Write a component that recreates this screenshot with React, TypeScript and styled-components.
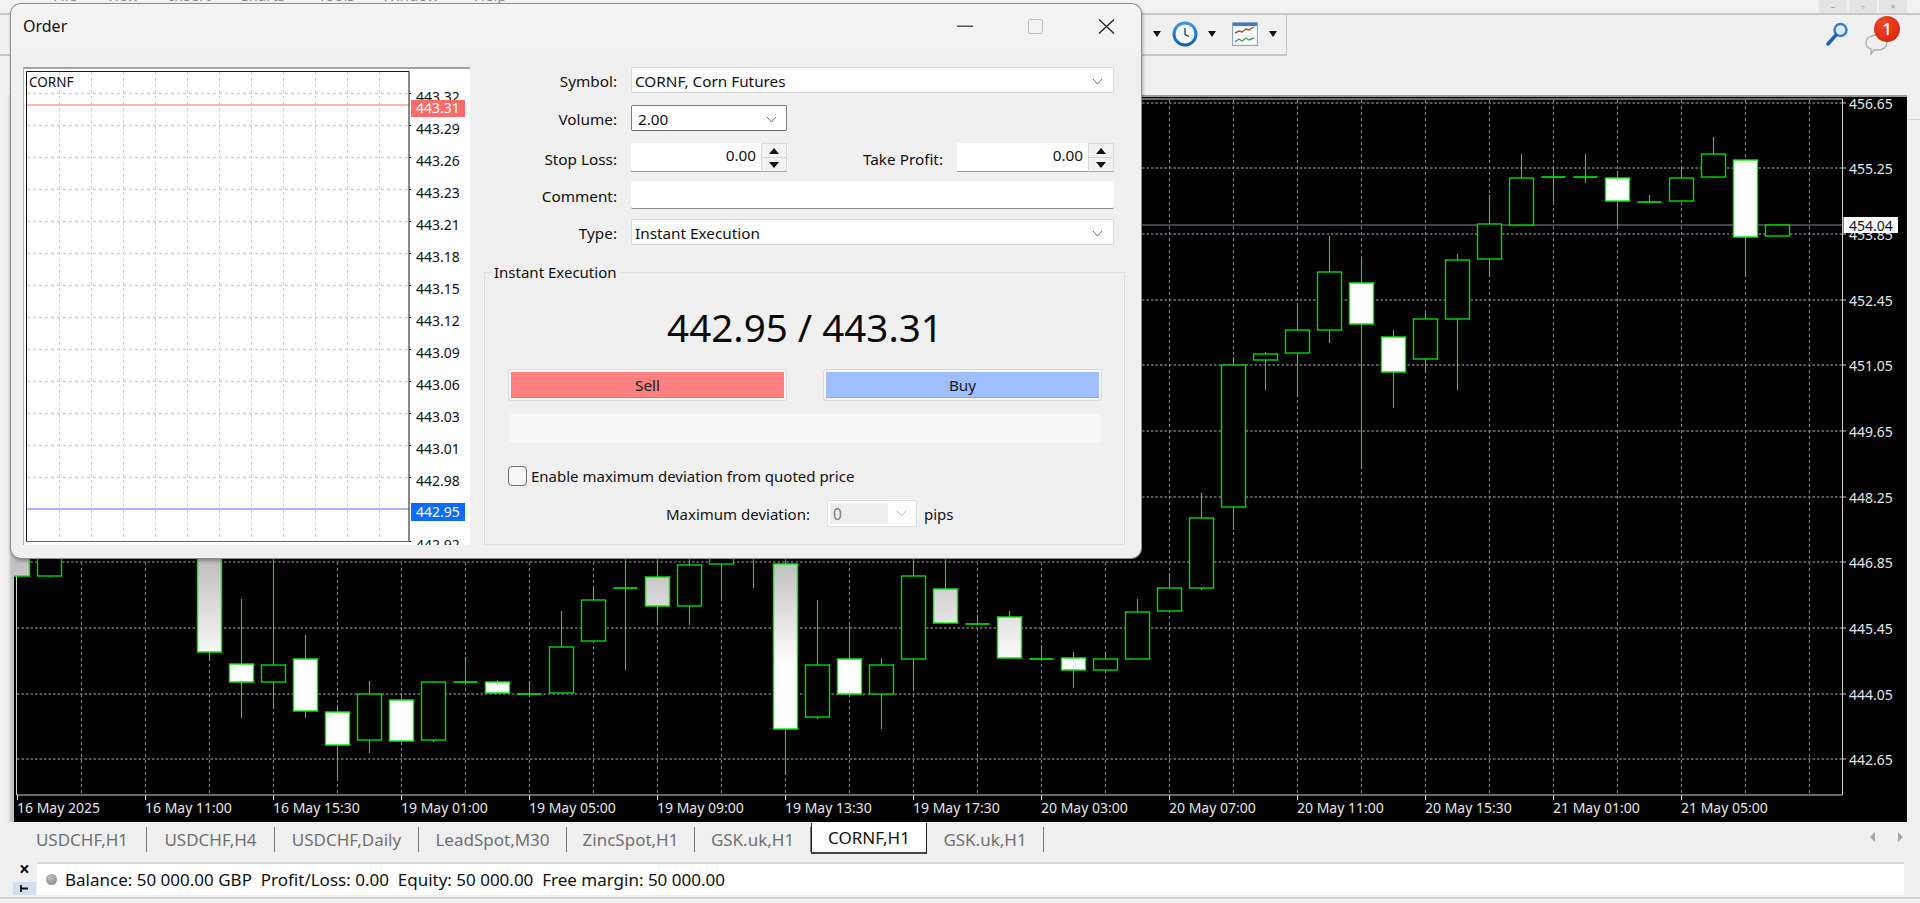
import React from "react"
import styled, { createGlobalStyle } from "styled-components"

const FONT = `"Noto Sans", "Liberation Sans", sans-serif`

type Candle = [number, number, number, number, number, boolean]

// x, wick top, body top, body bottom, wick bottom, filled
const CANDLES: Candle[] = [
  [17.5, 540, 540, 576, 576, true],
  [49.5, 540, 540, 576, 577, false],
  [209.5, 540, 540, 652, 659, true],
  [241.5, 599, 664, 682, 718, true],
  [273.5, 540, 665, 682, 707, false],
  [305.5, 635, 659, 711, 718, true],
  [337.5, 705, 712, 745, 778, true],
  [369.5, 681, 694, 740, 753, false],
  [401.5, 693, 700, 741, 741, true],
  [433.5, 681, 682, 740, 742, false],
  [465.5, 657, 682, 682, 682, false],
  [497.5, 680, 682, 693, 693, true],
  [529.5, 681, 694, 694, 694, false],
  [561.5, 611, 647, 693, 693, false],
  [593.5, 586, 600, 641, 641, false],
  [625.5, 540, 588, 588, 670, false],
  [657.5, 540, 577, 606, 625, true],
  [689.5, 540, 565, 606, 625, false],
  [721.5, 540, 540, 564, 600, false],
  [753.5, 540, 540, 540, 588, false],
  [785.5, 540, 564, 729, 775, true],
  [817.5, 600, 665, 717, 719, false],
  [849.5, 626, 659, 694, 694, true],
  [881.5, 658, 665, 694, 729, false],
  [913.5, 540, 576, 659, 689, false],
  [945.5, 540, 589, 623, 624, true],
  [977.5, 615, 624, 624, 624, false],
  [1009.5, 611, 617, 658, 658, true],
  [1041.5, 645, 659, 659, 659, false],
  [1073.5, 652, 658, 670, 688, true],
  [1105.5, 652, 659, 670, 672, false],
  [1137.5, 599, 612, 659, 659, false],
  [1169.5, 573, 588, 611, 611, false],
  [1201.5, 493, 518, 588, 590, false],
  [1233.5, 357, 365, 507, 530, false],
  [1265.5, 352, 354, 360, 390, false],
  [1297.5, 303, 330, 353, 396, false],
  [1329.5, 236, 272, 330, 343, false],
  [1361.5, 259, 283, 324, 468, true],
  [1393.5, 330, 337, 372, 408, true],
  [1425.5, 313, 319, 359, 373, false],
  [1457.5, 254, 260, 319, 390, false],
  [1489.5, 195, 224, 259, 275, false],
  [1521.5, 154, 178, 225, 225, false],
  [1553.5, 166, 177, 177, 202, false],
  [1585.5, 154, 177, 177, 183, false],
  [1617.5, 171, 178, 201, 226, true],
  [1649.5, 195, 202, 202, 202, false],
  [1681.5, 166, 178, 201, 201, false],
  [1713.5, 137, 154, 177, 178, false],
  [1745.5, 160, 160, 237, 275, true],
  [1777.5, 224, 225, 236, 236, false],
]

const PRICE_LEVELS: [number, string][] = [
  [103, "456.65"],
  [168, "455.25"],
  [234, "453.85"],
  [300, "452.45"],
  [365, "451.05"],
  [431, "449.65"],
  [497, "448.25"],
  [562, "446.85"],
  [628, "445.45"],
  [694, "444.05"],
  [759, "442.65"],
]

const TIME_LABELS = [
  "16 May 2025",
  "16 May 11:00",
  "16 May 15:30",
  "19 May 01:00",
  "19 May 05:00",
  "19 May 09:00",
  "19 May 13:30",
  "19 May 17:30",
  "20 May 03:00",
  "20 May 07:00",
  "20 May 11:00",
  "20 May 15:30",
  "21 May 01:00",
  "21 May 05:00",
]

const MINI_LEVELS: [number, string][] = [
  [93, "443.32"],
  [125, "443.29"],
  [157, "443.26"],
  [189, "443.23"],
  [221, "443.21"],
  [253, "443.18"],
  [285, "443.15"],
  [317, "443.12"],
  [349, "443.09"],
  [381, "443.06"],
  [413, "443.03"],
  [445, "443.01"],
  [477, "442.98"],
  [541, "442.92"],
]

const TABS: [string, number][] = [
  ["USDCHF,H1", 129],
  ["USDCHF,H4", 128],
  ["USDCHF,Daily", 144],
  ["LeadSpot,M30", 148],
  ["ZincSpot,H1", 128],
  ["GSK.uk,H1", 116],
  ["CORNF,H1", 116],
  ["GSK.uk,H1", 117],
]

const MENU = [
  ["File", 53],
  ["View", 106],
  ["Insert", 169],
  ["Charts", 239],
  ["Tools", 318],
  ["Window", 382],
  ["Help", 474],
] as const

const GlobalStyle = createGlobalStyle`
  html, body {
    margin: 0;
    height: 100%;
    overflow: hidden;
    background: #f0f0f0;
    font-family: ${FONT};
  }
`

const Page = styled.div`
  position: relative;
  width: 1920px;
  height: 903px;
  overflow: hidden;
  background: #f0f0f0;
`

const MenuBar = styled.div`
  height: 15px;
  box-sizing: border-box;
  border-bottom: 2px solid #c8c8c8;
  overflow: hidden;
  display: flex;
  background: #f2f2f2;
`

const MenuItem = styled.span<{ $w: number; $first?: number }>`
  width: ${(p) => p.$w}px;
  margin-left: ${(p) => p.$first ?? 0}px;
  margin-top: -15px;
  font-size: 15px;
  line-height: 20px;
  color: #8a8a8a;
  white-space: nowrap;
`

const WindowButtons = styled.div`
  display: flex;
  gap: 2px;
  margin-left: auto;
  margin-right: 13px;
`

const WindowButton = styled.div`
  width: 28px;
  height: 13px;
  background: #e4e4e4;
  display: flex;
  align-items: center;
  justify-content: center;
  font-size: 9px;
  color: #999;
`

const TopRow = styled.div`
  display: flex;
  height: 41px;
  margin-bottom: 39px;
  align-items: stretch;
`

const Toolbar = styled.div`
  width: 1287px;
  box-sizing: border-box;
  border-right: 1px solid #c6c6c6;
  border-bottom: 2px solid #c6c6c6;
  background: #f0f0f0;
  display: flex;
  align-items: center;
  justify-content: flex-end;
  padding-right: 9px;
  padding-bottom: 1px;
`

const DropArrow = styled.div`
  width: 0;
  height: 0;
  border-left: 4px solid transparent;
  border-right: 4px solid transparent;
  border-top: 6px solid #111;
`

const RightTools = styled.div`
  margin-left: auto;
  display: flex;
  align-items: center;
  gap: 16px;
  padding-right: 20px;
`

const BubbleWrap = styled.div`
  position: relative;
  width: 35px;
  height: 36px;
`

const Badge = styled.div`
  position: absolute;
  right: 0;
  top: -2px;
  width: 26px;
  height: 26px;
  border-radius: 50%;
  background: radial-gradient(circle at 40% 30%, #f04a28, #cf1c06);
  color: #fff;
  font-size: 17px;
  font-weight: 500;
  line-height: 26px;
  text-align: center;
`

const ChartRow = styled.div`
  display: flex;
  height: 727px;
`

const StripLeft = styled.div`
  width: 14px;
  background: linear-gradient(90deg, #f2f2f2 0, #eeeeee 8px, #bdbdbd 12px, #c8c8c8 14px);
`

const StripRight = styled.div`
  flex: 1;
  background: linear-gradient(#f0f0f0 24px, #d6d6d6 24px, #d6d6d6 25px, #f0f0f0 25px);
`

const ChartPanel = styled.div`
  width: 1893px;
  height: 727px;
  background: #000;
`

const ChartSvg = styled.svg`
  display: block;
  font-family: ${FONT};
`

const TabBar = styled.div`
  height: 33px;
  margin-left: 14px;
  padding-left: 4px;
  padding-right: 17px;
  display: flex;
  align-items: flex-start;
`

const Tab = styled.div<{ $w: number; $active?: boolean }>`
  width: ${(p) => p.$w}px;
  height: ${(p) => (p.$active ? 31 : 25)}px;
  margin-top: ${(p) => (p.$active ? 1 : 5)}px;
  box-sizing: border-box;
  display: flex;
  align-items: center;
  justify-content: center;
  font-size: 17px;
  color: ${(p) => (p.$active ? "#111" : "#707070")};
  background: ${(p) => (p.$active ? "#fff" : "transparent")};
  border-right: 1px solid ${(p) => (p.$active ? "#222" : "#777")};
  border-left: ${(p) => (p.$active ? "1px solid #222" : "0")};
  border-bottom: ${(p) => (p.$active ? "2px solid #444" : "0")};
  white-space: nowrap;
`

const TabArrows = styled.div`
  margin-left: auto;
  margin-top: 10px;
  display: flex;
  gap: 23px;
`

const TabArrow = styled.div<{ $right?: boolean }>`
  width: 0;
  height: 0;
  border-top: 5px solid transparent;
  border-bottom: 5px solid transparent;
  border-${(p) => (p.$right ? "left" : "right")}: 5px solid #a6a6a6;
`

const StatusRow = styled.div`
  height: 37px;
  margin-top: 7px;
  display: flex;
  align-items: flex-start;
  border-bottom: 2px solid #d2d2d2;
  box-sizing: border-box;
`

const StatusSide = styled.div`
  width: 37px;
  height: 33px;
  flex: none;
  padding-left: 13px;
  box-sizing: border-box;
  display: flex;
  flex-direction: column;
`

const StatusClose = styled.div`
  width: 23px;
  height: 20px;
  text-align: center;
  font-size: 19px;
  font-weight: 700;
  line-height: 14px;
  color: #111;
`

const StatusDock = styled.div`
  width: 23px;
  height: 13px;
  background: #cfe0f2;
  display: flex;
  align-items: center;
  justify-content: center;
`

const StatusBox = styled.div`
  width: 1858px;
  height: 31px;
  background: #fff;
  border-top: 2px solid #d8d8d8;
  display: flex;
  align-items: center;
  padding-left: 9px;
  font-size: 17px;
  color: #111;
  white-space: pre;
`

const StatusDot = styled.div`
  width: 11px;
  height: 11px;
  border-radius: 50%;
  margin-right: 8px;
  background: radial-gradient(circle at 40% 35%, #c4c4c4, #7c7c7c);
`

const Dialog = styled.div`
  position: absolute;
  left: 11px;
  top: 4px;
  width: 1130px;
  height: 554px;
  background: #f0f0f0;
  border-radius: 10px;
  box-shadow: 0 0 0 1px #8e8e8e, 1px 2px 4px rgba(0, 0, 0, 0.45);
  overflow: hidden;
  color: #111;
`

const DialogTitle = styled.div`
  height: 44px;
  background: #f3f3f3;
  display: flex;
  align-items: center;
  padding: 0 26px 0 12px;
  font-size: 16px;
  box-sizing: border-box;
`

const DialogButtons = styled.div`
  margin-left: auto;
  display: flex;
  align-items: center;
  gap: 55px;
`

const DialogBody = styled.div`
  display: flex;
  padding: 19px 0 0 12px;
  align-items: flex-start;
`

const MiniBox = styled.div`
  width: 447px;
  height: 478px;
  flex: none;
  background: #fff;
  border-top: 2px solid #a2a2a2;
  border-left: 1px solid #b4b4b4;
  box-sizing: border-box;
  overflow: hidden;
`

const MiniSvg = styled.svg`
  display: block;
  font-family: ${FONT};
`

const FormColumn = styled.div`
  width: 641px;
  margin-left: 14px;
  flex: none;
`

const FormRow = styled.div<{ $mt?: number }>`
  display: flex;
  align-items: center;
  margin-top: ${(p) => p.$mt ?? 0}px;
`

const FieldLabel = styled.label<{ $w?: number }>`
  width: ${(p) => p.$w ?? 133}px;
  flex: none;
  text-align: right;
  margin-right: 14px;
  padding-top: 2px;
  font-size: 15.3px;
  white-space: nowrap;
`

const Combo = styled.div<{ $w: number; $focus?: boolean }>`
  width: ${(p) => p.$w}px;
  height: 26px;
  box-sizing: border-box;
  background: #fff;
  border: 1px solid ${(p) => (p.$focus ? "#7a7a7a" : "#dcdcdc")};
  border-bottom-color: ${(p) => (p.$focus ? "#6a6a6a" : "#cfcfcf")};
  border-radius: 2px;
  display: flex;
  align-items: center;
  padding: 2px ${(p) => (p.$focus ? 9 : 10)}px 0 ${(p) => (p.$focus ? 6 : 3)}px;
  font-size: 15.3px;
  justify-content: space-between;
`

const SpinField = styled.div<{ $w: number }>`
  display: flex;
  width: ${(p) => p.$w}px;
  height: 29px;
  flex: none;
`

const SpinInput = styled.div`
  flex: 1;
  background: #fff;
  border-bottom: 1px solid #9a9a9a;
  box-sizing: border-box;
  display: flex;
  align-items: center;
  justify-content: flex-end;
  padding: 0 5px 5px 0;
  font-size: 15.3px;
`

const SpinButtons = styled.div`
  width: 26px;
  display: flex;
  flex-direction: column;
  box-sizing: border-box;
  border: 1px solid #dadada;
  border-bottom-color: #a8a8a8;
  gap: 1px;
  background: #d4d4d4;
`

const SpinButton = styled.div`
  flex: 1;
  background: #f2f2f2;
  display: flex;
  align-items: center;
  justify-content: center;
`

const SpinArrow = styled.div<{ $down?: boolean }>`
  width: 0;
  height: 0;
  border-left: 5px solid transparent;
  border-right: 5px solid transparent;
  border-${(p) => (p.$down ? "top" : "bottom")}: 6px solid #111;
`

const CommentInput = styled.div`
  width: 483px;
  height: 28px;
  background: #fff;
  border-bottom: 1px solid #8e8e8e;
  box-sizing: border-box;
  border-radius: 2px;
`

const Group = styled.fieldset`
  margin: 17px 0 0;
  padding: 0 23px 17px 24px;
  border: 1px solid #dedede;
  box-sizing: border-box;
  width: 641px;
  min-width: 0;
  height: 283px;
`

const GroupLegend = styled.legend`
  margin-left: -17px;
  padding: 0 2px;
  height: 20px;
  line-height: 20px;
  font-size: 15px;
`

const Price = styled.div`
  margin-top: 23px;
  height: 46px;
  line-height: 44px;
  text-align: center;
  font-size: 38.6px;
  color: #0a0a0a;
`

const TradeRow = styled.div`
  display: flex;
  justify-content: space-between;
  margin-top: 19px;
`

const TradeButton = styled.div<{ $color: string; $edge: string }>`
  width: 277px;
  height: 30px;
  box-sizing: border-box;
  border: 2px solid #f7f7f7;
  border-radius: 2px;
  box-shadow: 0 0 0 1px #dcdcdc, inset 0 -1px 0 ${(p) => p.$edge};
  background: ${(p) => p.$color};
  display: flex;
  align-items: center;
  justify-content: center;
  font-size: 15.3px;
  color: #1a1a1a;
`

const MessageBar = styled.div`
  height: 29px;
  margin-top: 14px;
  background: #f8f8f8;
  border-radius: 2px;
`

const CheckRow = styled.div`
  display: flex;
  align-items: center;
  height: 20px;
  margin-top: 23px;
  margin-left: -1px;
  font-size: 15px;
  white-space: nowrap;
`

const CheckBox = styled.div`
  width: 19px;
  height: 20px;
  box-sizing: border-box;
  border: 1px solid #6e6e6e;
  border-radius: 4px;
  background: #f6f6f6;
  margin-right: 4px;
`

const DeviationRow = styled.div`
  display: flex;
  align-items: center;
  height: 27px;
  margin-top: 14px;
  margin-left: 157px;
  font-size: 15px;
  white-space: nowrap;
`

const DeviationCombo = styled.div`
  width: 90px;
  height: 27px;
  margin: 0 7px 0 17px;
  padding: 2px;
  box-sizing: border-box;
  background: #fff;
  border: 1px solid #dedede;
  border-radius: 2px;
  display: flex;
  align-items: center;
`

const DeviationValue = styled.div`
  width: 58px;
  height: 100%;
  padding-left: 3px;
  box-sizing: border-box;
  background: #eeeeee;
  color: #7c7c7c;
  font-size: 15.5px;
  display: flex;
  align-items: center;
`

const DeviationChevron = styled.div`
  flex: 1;
  display: flex;
  justify-content: center;
`

const Chevron = ({ light }: { light?: boolean }) => (
  <svg width="11" height="7" viewBox="0 0 11 7" fill="none">
    <path d="M1 1l4.5 5L10 1" stroke={light ? "#b4b4b4" : "#6e6e6e"} strokeWidth="1" />
  </svg>
)

const ClockIcon = () => (
  <svg width="26" height="26" viewBox="0 0 26 26" style={{ marginRight: 10, marginLeft: 11 }}>
    <defs>
      <linearGradient id="ring" x1="0" y1="0" x2="0" y2="1">
        <stop offset="0" stopColor="#3d9be0" />
        <stop offset="1" stopColor="#0b5fa8" />
      </linearGradient>
    </defs>
    <circle cx="13" cy="13" r="12.5" fill="url(#ring)" />
    <circle cx="13" cy="13" r="9.5" fill="#f4f7fa" />
    <path d="M13 7v6.5l4 2" stroke="#334" strokeWidth="1.3" fill="none" />
  </svg>
)

const ChartsIcon = () => (
  <svg width="26" height="24" viewBox="0 0 26 24" style={{ marginRight: 11, marginLeft: 16 }}>
    <rect x="0.5" y="0.5" width="25" height="23" fill="#e9f0f7" stroke="#8fa9c4" />
    <rect x="1" y="1" width="24" height="3" fill="#3e7fc1" />
    <rect x="2" y="5" width="22" height="8" fill="#fff" />
    <rect x="2" y="14" width="22" height="8" fill="#fff" />
    <path d="M3 11l4-2 3 1 4-3 3 1 5-3" stroke="#b5452c" strokeWidth="1.4" fill="none" />
    <path d="M3 20l4-3 3 2 4-3 3 2 5-2" stroke="#3aa04a" strokeWidth="1.4" fill="none" />
  </svg>
)

const SearchIcon = () => (
  <svg width="24" height="24" viewBox="0 0 24 24" style={{ marginTop: -3 }}>
    <circle cx="15.500" cy="8" r="6" fill="#dbeafa" stroke="#3a78c8" strokeWidth="2.4" />
    <path d="M11 13L3 22" stroke="#1f5fb4" strokeWidth="3.4" strokeLinecap="round" />
  </svg>
)

const BubbleIcon = () => (
  <svg width="24" height="22" viewBox="0 0 24 22" style={{ position: "absolute", left: 0, top: 16 }}>
    <path
      d="M12 1c6 0 10 3 10 7.500S18 16 12 16l-3 0-3 4 0-5C3 14 1 11.500 1 8.500 1 4 6 1 12 1z"
      fill="#eef0f0"
      stroke="#a6aaaa"
      strokeWidth="1.300"
    />
  </svg>
)

const MainChart = () => {
  const vGrid = Array.from({ length: 28 }, (_, i) => 81.5 + 64 * i)
  const ticks = TIME_LABELS.map((_, i) => 17 + 128 * i)
  return (
    <ChartSvg width={1893} height={727} viewBox="14 95 1893 727">
      <defs>
        <linearGradient id="fade" gradientUnits="userSpaceOnUse" x1="0" y1="558" x2="0" y2="665">
          <stop offset="0" stopColor="#bdbdbd" />
          <stop offset="1" stopColor="#ffffff" />
        </linearGradient>
      </defs>
      <rect x="14" y="95" width="1893" height="2" fill="#9a9a9a" />
      {vGrid.map((x) => (
        <line key={x} x1={x} x2={x} y1={100} y2={795} stroke="#76859a" strokeDasharray="3 3" />
      ))}
      {PRICE_LEVELS.map(([y]) => (
        <line key={y} x1={17} x2={1842} y1={y} y2={y} stroke="#70757a" strokeWidth="1.6" strokeDasharray="2.5 2" />
      ))}
      <line x1={14} x2={1843} y1={225} y2={225} stroke="#565c62" strokeWidth="1.6" />
      <path d="M16.500 99H1842.500V795H16.500Z" fill="none" stroke="#cfcfcf" />
      {ticks.map((x) => (
        <line key={x} x1={x + 0.5} x2={x + 0.5} y1={795} y2={800} stroke="#d8d8d8" />
      ))}
      {PRICE_LEVELS.map(([y]) => (
        <line key={y} x1={1843} x2={1846} y1={y} y2={y} stroke="#cfcfcf" />
      ))}
      {CANDLES.map(([x, wickTop, top, bottom, wickBottom, filled]) => (
        <g key={x}>
          <line x1={x} x2={x} y1={wickTop} y2={wickBottom} stroke="#00f000" strokeWidth="1.1" />
          {top === bottom ? (
            <line x1={x - 12} x2={x + 12} y1={top} y2={top} stroke="#00d800" strokeWidth="1.8" />
          ) : (
            <rect
              x={x - 12}
              y={top}
              width={24}
              height={bottom - top}
              fill={filled ? (x < 1141 ? "url(#fade)" : "#fff") : "#000"}
              stroke={filled ? "#00f000" : "#00d800"}
              strokeWidth="1.4"
            />
          )}
        </g>
      ))}
      {PRICE_LEVELS.map(([y, label]) => (
        <text key={label} x={1849} y={y + 6} fill="#e4e4e4" fontSize="14">
          {label}
        </text>
      ))}
      <rect x="1843.500" y="217" width="54.500" height="16" fill="#fff" />
      <text x={1849} y={231} fill="#111" fontSize="14">
        454.04
      </text>
      {TIME_LABELS.map((label, i) => (
        <text key={label} x={17 + 128 * i} y={813} fill="#e4e4e4" fontSize="14">
          {label}
        </text>
      ))}
    </ChartSvg>
  )
}

const MiniChart = () => {
  const vGrid = Array.from({ length: 11 }, (_, i) => 59.5 + 32 * i)
  return (
    <MiniSvg width={446} height={476} viewBox="24 69 446 476">
      {vGrid.map((x) => (
        <line key={x} x1={x} x2={x} y1={72} y2={541} stroke="#d2d2d2" strokeDasharray="3 3" />
      ))}
      {MINI_LEVELS.filter(([y]) => y < 541).map(([y]) => (
        <line key={y} x1={27} x2={409} y1={y + 0.5} y2={y + 0.5} stroke="#d2d2d2" strokeWidth="1.3" strokeDasharray="3 3" />
      ))}
      <line x1={27} x2={409} y1={105} y2={105} stroke="#ff9c9c" strokeWidth="1.5" />
      <line x1={27} x2={409} y1={509} y2={509} stroke="#78a4f4" strokeWidth="1.5" />
      <path d="M26.500 71.500H409V541.500H26.500Z" fill="none" stroke="#111" />
      <line x1={26} x2={409} y1={541.5} y2={541.5} stroke="#666" />
      <text x={29} y={87} fontSize="13.500" fill="#111">
        CORNF
      </text>
      {MINI_LEVELS.map(([y, label]) => (
        <g key={label}>
          <line x1={409} x2={411} y1={y + 0.5} y2={y + 0.5} stroke="#111" />
          <text x={416} y={y + 9} fontSize="14" fill="#111">
            {label}
          </text>
        </g>
      ))}
      <rect x={411} y={100} width={54} height={17} fill="#ff6a6a" />
      <text x={416} y={113} fontSize="14" fill="#fff">
        443.31
      </text>
      <rect x={411} y={503} width={54} height={18} fill="#0a6cff" />
      <text x={416} y={517} fontSize="14" fill="#fff">
        442.95
      </text>
    </MiniSvg>
  )
}

const Spin = ({ w }: { w: number }) => (
  <SpinField $w={w}>
    <SpinInput>0.00</SpinInput>
    <SpinButtons>
      <SpinButton>
        <SpinArrow />
      </SpinButton>
      <SpinButton>
        <SpinArrow $down />
      </SpinButton>
    </SpinButtons>
  </SpinField>
)

const OrderDialog = () => (
  <Dialog>
    <DialogTitle>
      Order
      <DialogButtons>
        <svg width="16" height="3" viewBox="0 0 16 3">
          <rect width="16" height="1.500" y="0.500" fill="#555" />
        </svg>
        <svg width="15" height="15" viewBox="0 0 15 15">
          <rect x="0.500" y="0.500" width="14" height="14" rx="1.500" fill="none" stroke="#c0c0c0" />
        </svg>
        <svg width="17" height="15" viewBox="0 0 17 15">
          <path d="M1 0.500L16 14.500M16 0.500L1 14.500" stroke="#222" strokeWidth="1.300" />
        </svg>
      </DialogButtons>
    </DialogTitle>
    <DialogBody>
      <MiniBox>
        <MiniChart />
      </MiniBox>
      <FormColumn>
        <FormRow>
          <FieldLabel>Symbol:</FieldLabel>
          <Combo $w={483}>
            CORNF, Corn Futures
            <Chevron />
          </Combo>
        </FormRow>
        <FormRow $mt={12}>
          <FieldLabel>Volume:</FieldLabel>
          <Combo $w={156} $focus>
            2.00
            <Chevron />
          </Combo>
        </FormRow>
        <FormRow $mt={12}>
          <FieldLabel>Stop Loss:</FieldLabel>
          <Spin w={156} />
          <FieldLabel $w={156}>Take Profit:</FieldLabel>
          <Spin w={157} />
        </FormRow>
        <FormRow $mt={9}>
          <FieldLabel>Comment:</FieldLabel>
          <CommentInput />
        </FormRow>
        <FormRow $mt={10}>
          <FieldLabel>Type:</FieldLabel>
          <Combo $w={483}>
            Instant Execution
            <Chevron />
          </Combo>
        </FormRow>
        <Group>
          <GroupLegend>Instant Execution</GroupLegend>
          <Price>442.95 / 443.31</Price>
          <TradeRow>
            <TradeButton $color="#ff8080" $edge="#e86c6c">
              Sell
            </TradeButton>
            <TradeButton $color="#a0bfff" $edge="#88a8ec">
              Buy
            </TradeButton>
          </TradeRow>
          <MessageBar />
          <CheckRow>
            <CheckBox />
            Enable maximum deviation from quoted price
          </CheckRow>
          <DeviationRow>
            Maximum deviation:
            <DeviationCombo>
              <DeviationValue>0</DeviationValue>
              <DeviationChevron>
                <Chevron light />
              </DeviationChevron>
            </DeviationCombo>
            pips
          </DeviationRow>
        </Group>
      </FormColumn>
    </DialogBody>
  </Dialog>
)

const App = () => {
  return (
    <Page>
      <GlobalStyle />
      <MenuBar>
        {MENU.map(([label, x], i) => (
          <MenuItem key={label} $first={i === 0 ? x : 0} $w={(i < MENU.length - 1 ? MENU[i + 1][1] : x + 40) - x}>
            {label}
          </MenuItem>
        ))}
        <WindowButtons>
          <WindowButton>–</WindowButton>
          <WindowButton>▫</WindowButton>
          <WindowButton>×</WindowButton>
        </WindowButtons>
      </MenuBar>
      <TopRow>
        <Toolbar>
          <DropArrow />
          <ClockIcon />
          <DropArrow />
          <ChartsIcon />
          <DropArrow />
        </Toolbar>
        <RightTools>
          <SearchIcon />
          <BubbleWrap>
            <BubbleIcon />
            <Badge>1</Badge>
          </BubbleWrap>
        </RightTools>
      </TopRow>
      <ChartRow>
        <StripLeft />
        <ChartPanel>
          <MainChart />
        </ChartPanel>
        <StripRight />
      </ChartRow>
      <TabBar>
        {TABS.map(([t, w], i) => (
          <Tab key={i} $w={w} $active={i === 6}>
            {t}
          </Tab>
        ))}
        <TabArrows>
          <TabArrow />
          <TabArrow $right />
        </TabArrows>
      </TabBar>
      <StatusRow>
        <StatusSide>
          <StatusClose>×</StatusClose>
          <StatusDock>
            <svg width="9" height="9" viewBox="0 0 9 9">
              <path d="M1 1v7M1 4.500h7" stroke="#111" strokeWidth="1.800" />
            </svg>
          </StatusDock>
        </StatusSide>
        <StatusBox>
          <StatusDot />
          {"Balance: 50 000.00 GBP  Profit/Loss: 0.00  Equity: 50 000.00  Free margin: 50 000.00"}
        </StatusBox>
      </StatusRow>
      <OrderDialog />
    </Page>
  )
}

export default App
